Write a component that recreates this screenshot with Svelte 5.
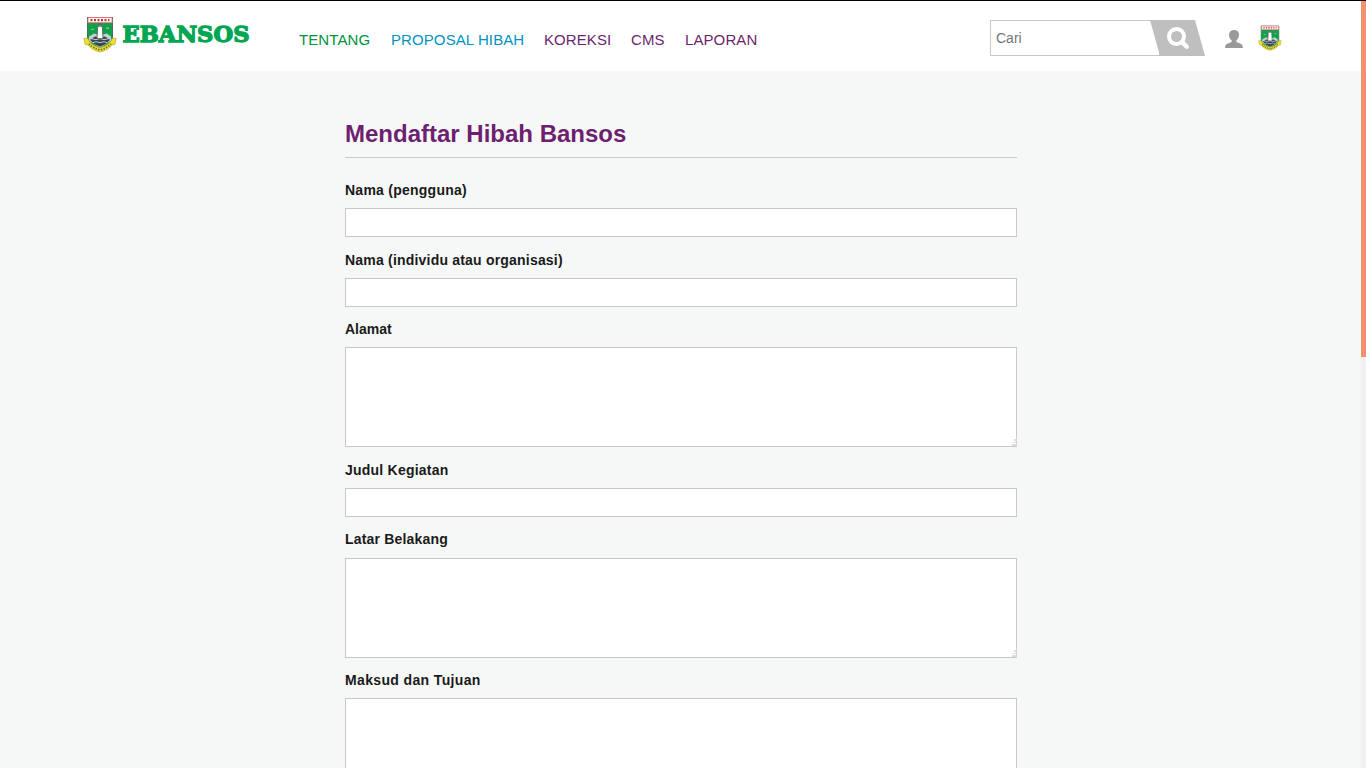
<script>
  const nav = [
    { label: 'TENTANG', tone: 'green', w: 72 },
    { label: 'PROPOSAL HIBAH', tone: 'blue', w: 133 },
    { label: 'KOREKSI', tone: 'purple', w: 67 },
    { label: 'CMS', tone: 'purple', w: 34 },
    { label: 'LAPORAN', tone: 'purple', w: 72 }
  ];
  const fields = [
    { label: 'Nama (pengguna)', track: 0.25 },
    { label: 'Nama (individu atau organisasi)', track: 0.2 },
    { label: 'Alamat', track: 0, area: true },
    { label: 'Judul Kegiatan', track: 0.23 },
    { label: 'Latar Belakang', track: 0.18, area: true },
    { label: 'Maksud dan Tujuan', track: 0.36, area: true }
  ];
</script>

{#snippet emblem(size, height)}
  <svg class="emblem" width={size} height={height} viewBox="0 0 34 36" preserveAspectRatio="none" aria-hidden="true">
    <path d="M4.500 1.500H29.500V22Q29 28 17 33Q5 28 4.500 22Z" fill="#12a14b" stroke="#497354" />
    <path d="M5 1.500h24v5H5z" fill="#fff" stroke="#e5686a" stroke-width=".8" />
    <path d="M7.500 4h2m1.500 0h2m1.500 0h2m1.500 0h2m1.500 0h2m1.500 0h1.500" stroke="#df252f" stroke-width="2" />
    <path d="M6 20l5-3 4 1h5l4-1 4 3v4l-11 7-11-7z" fill="#c3cdd2" />
    <path d="M7 23l5-3 5 1 5-1 5 3-4 4-6 3-6-3z" fill="#384650" />
    <path d="M8 22l5 1 4-1 4 1 5-1M10 26l3-1 4 1 4-1 3 1" fill="none" stroke="#e5eaed" stroke-width=".8" />
    <path d="M14 22l.5-10.500L17 7.500l2.500 4 .5 10.500z" fill="#fff" stroke="#4f6158" stroke-width=".9" />
    <path d="M17 7v4" stroke="#56615e" stroke-width="1.300" />
    <path d="M8 13h3M23 12h3" stroke="#71c48d" stroke-width="1.400" />
    <path d="M1 21.500l4 .5q1.500 6 12 9 10.500-3 12-9l4-.5-1 6-3 .5q-3 5-12 7Q8 33 5 28l-3-.5z" fill="#eee22b" stroke="#aaa32b" stroke-width=".6" />
    <path d="M6 27q4 4.500 11 6 7-1.500 11-6" fill="none" stroke="#6c6b25" stroke-width="1.700" stroke-dasharray="1.400 1.300" />
  </svg>
{/snippet}

<div class="page">
  <div class="main">
    <header>
      <div class="brand">
        {@render emblem(34, 37)}
        <svg class="word" width="130" height="24" viewBox="0 0 130 24">
          <text x="1.500" y="19.400" textLength="127" lengthAdjust="spacingAndGlyphs">EBANSOS</text>
        </svg>
      </div>
      <nav>
        {#each nav as item}
          <a class={item.tone} href="#top" style:width="{item.w}px">{item.label}</a>
        {/each}
      </nav>
      <div class="search">
        <input type="text" placeholder="Cari" aria-label="Cari" />
        <svg class="go" width="55" height="36" viewBox="0 0 55 36">
          <path d="M0 0H45L55 36H10Z" fill="#bfbfbf" />
          <circle cx="26.500" cy="16.500" r="7.500" fill="none" stroke="#fff" stroke-width="4" />
          <path d="M32 22l4.800 4.800" stroke="#fff" stroke-width="4.400" stroke-linecap="round" />
        </svg>
      </div>
      <svg class="user" width="18" height="18" viewBox="0 0 18 18">
        <path d="M9 0C6 0 4 1.900 4 4.700c0 2.400 1 4.400 2.600 5.600v1.600L1.800 14Q0 15 0 18h18q0-3-1.800-4L11.400 11.900v-1.600C13 9.100 14 7.100 14 4.700 14 1.900 12 0 9 0Z" fill="#999" />
      </svg>
      {@render emblem(24, 26)}
    </header>
    <form>
      <h1>Mendaftar Hibah Bansos</h1>
      {#each fields as field, i}
        <div class="field">
          <label for="f{i}" style:letter-spacing="{field.track}px">{field.label}</label>
          {#if field.area}
            <div class="areabox">
              <textarea id="f{i}"></textarea>
              <svg class="grip" width="5" height="9" viewBox="0 0 5 9" shape-rendering="crispEdges">
                <path d="M4 0h1v1H4zM2 2h3v2H2zM1 5h4v1H1zM0 7h5v2H0z" fill="#dcdcdc" />
              </svg>
            </div>
          {:else}
            <input id="f{i}" type="text" />
          {/if}
        </div>
      {/each}
    </form>
  </div>
  <div class="scroll"><div class="thumb"></div></div>
</div>

<style>
  :global(body) { margin: 0; overflow: hidden; }
  .page {
    display: flex;
    box-sizing: border-box;
    height: 768px;
    overflow: hidden;
    border-top: 1px solid #000;
    background: #f6f8f7;
    color: #1a1a1a;
    font-family: "Liberation Sans", Arial, sans-serif;
  }
  .main { flex: 1; min-width: 0; }
  header {
    display: flex;
    align-items: flex-start;
    box-sizing: border-box;
    height: 70px;
    padding-left: 83px;
    background: #fff;
  }
  .emblem { display: block; flex: none; }
  .brand { display: flex; width: 216px; padding-top: 15px; }
  .word { display: block; margin: 7px 0 0 4px; overflow: visible; }
  .word text {
    font: bold 22px "DejaVu Serif", serif;
    fill: #00a651;
    stroke: #00a651;
    stroke-width: 1.3px;
  }
  nav { display: flex; gap: 20px; width: 691px; padding-top: 29px; }
  nav a { font-size: 15px; line-height: 20px; letter-spacing: 0.09px; white-space: nowrap; text-decoration: none; }
  .green { color: #00923f; }
  .blue { color: #0093bf; }
  .purple { color: #6d1f70; }
  .search { display: flex; width: 215px; margin-top: 19px; }
  .search input {
    box-sizing: border-box;
    width: 170px;
    height: 36px;
    margin-right: -10px;
    padding: 0 5px;
    border: 1px solid #c8c8c8;
    background: #fff;
    font: 14px "Liberation Sans", Arial, sans-serif;
  }
  .search input::placeholder { color: #757575; opacity: 1; }
  .go { display: block; flex: none; }
  .user { flex: none; margin: 29px 15px 0 20px; }
  header > :global(.emblem) { margin-top: 24px; }
  form { width: 672px; margin: 0 0 0 345px; padding-top: 47px; }
  h1 {
    box-sizing: border-box;
    height: 40px;
    margin: 0 0 22px;
    border-bottom: 1px solid #c8c8c8;
    color: #6d1f70;
    font-size: 24px;
    line-height: 31px;
  }
  .field { margin-bottom: 12.400px; }
  label { display: block; height: 28.200px; font-size: 14px; font-weight: bold; line-height: 20px; }
  .field input, textarea {
    display: block;
    box-sizing: border-box;
    width: 100%;
    height: 29px;
    margin: 0;
    border: 1px solid #c8c8c8;
    background: #fff;
    outline: 0;
  }
  .areabox { position: relative; }
  textarea { height: 100px; resize: none; }
  .grip { position: absolute; right: 0; bottom: 1px; }
  .scroll { width: 5px; background: #f2f0f1; }
  .thumb { height: 356px; background: #f0926d; }
</style>
